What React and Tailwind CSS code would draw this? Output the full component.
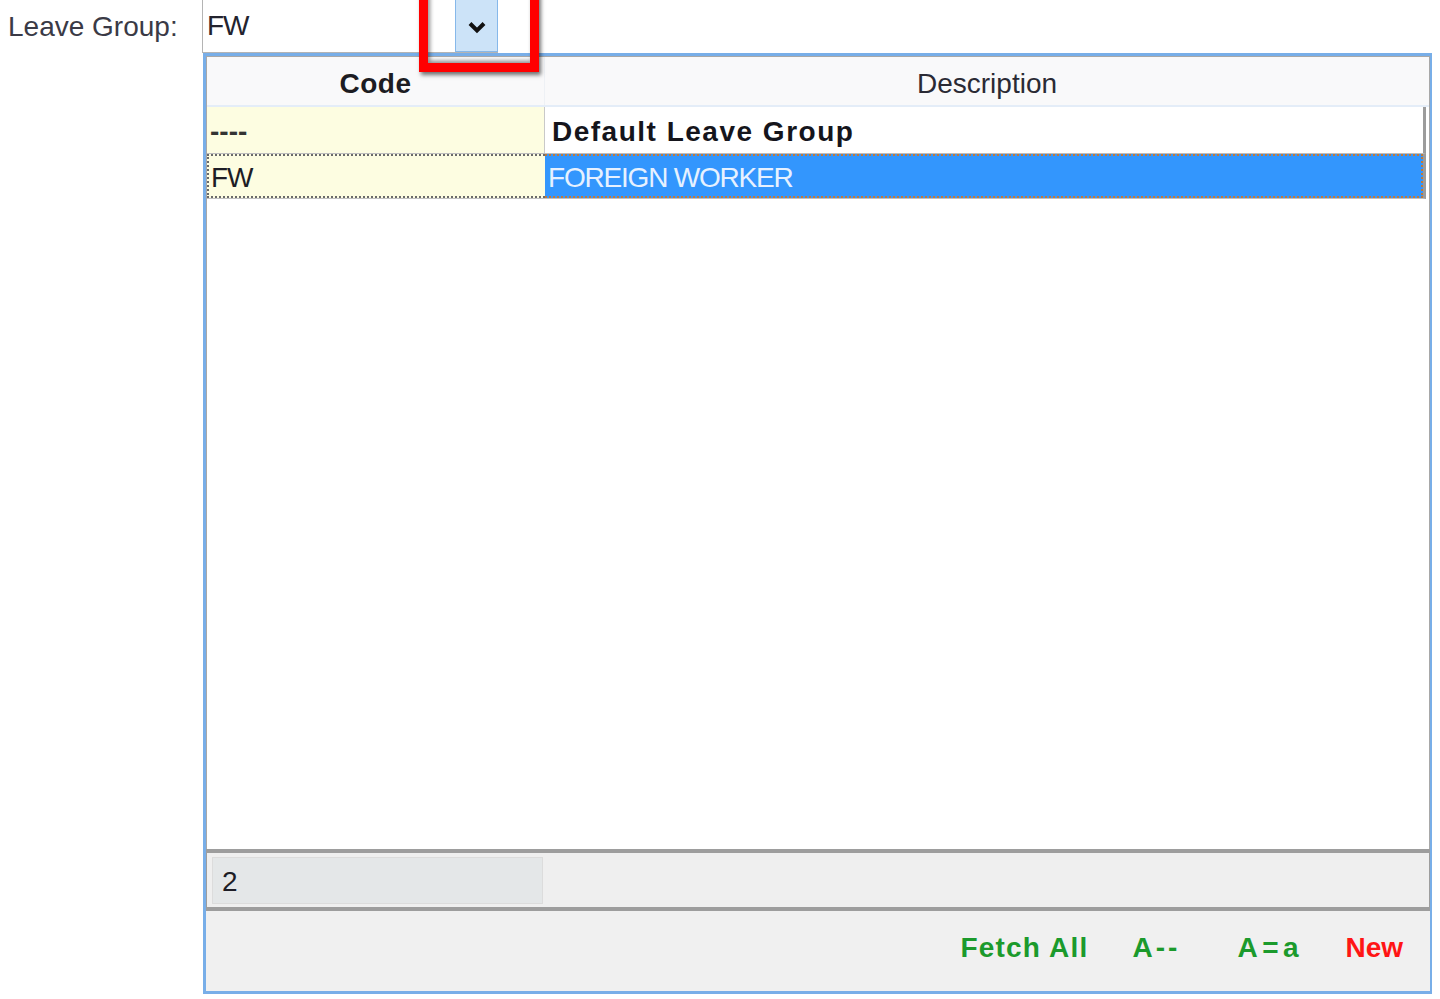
import React from "react";

export default function App() {
  return (
    <div
      className="relative w-[1440px] h-[999px] overflow-hidden bg-white"
      style={{ fontFamily: '"Liberation Sans", Arial, sans-serif' }}
    >
      {/* Top row: label + combo */}
      <div className="flex h-[53px] items-stretch">
        <div className="w-[202px] pl-[8px] flex items-center text-[28px] text-[#3a3a46]">
          Leave Group:
        </div>
        <div className="relative flex w-[296px] border-l border-b border-[#b4b4b4] bg-white -mt-[2px]">
          <div className="flex-1 pl-[4px] flex items-center pt-[2px] text-[28px] text-[#23232e] tracking-[-1px]">
            FW
          </div>
          <div className="w-[43px] bg-[#cce3f8] border border-[#86b8ea] flex items-center justify-center pt-[3px]">
            <svg width="20" height="14" viewBox="0 0 20 14">
              <path d="M3 3.5 L10 10.5 L17 3.5" fill="none" stroke="#111" strokeWidth="4" strokeLinejoin="miter" />
            </svg>
          </div>
        </div>
      </div>

      {/* Red highlight box */}
      <div className="absolute left-[419px] top-[-12px] w-[120px] h-[84px] border-[9px] border-[#ff0000] shadow-[2px_3px_4px_rgba(0,0,0,0.55),inset_2px_-2px_4px_rgba(0,0,0,0.45)]" />

      {/* Dropdown panel */}
      <div className="ml-[203px] w-[1229px] h-[941px] border-[3px] border-r-2 border-[#78aee8] flex flex-col bg-white">
        {/* Grid */}
        <div className="flex-1 flex flex-col border-x border-t border-[#a8a8a8] bg-white">
          {/* header */}
          <div className="flex h-[50px] bg-[#f9f9fa] border-b-2 border-[#e4edf8]">
            <div className="w-[338px] flex items-center justify-center pt-[6px] border-r border-[#eef1f5] text-[28px] font-bold text-[#1c1c22] tracking-[0.5px]">
              Code
            </div>
            <div className="flex-1 flex items-center justify-center pt-[6px] text-[28px] text-[#2a2a34]">
              Description
            </div>
          </div>
          {/* row 1 */}
          <div className="flex h-[47px] border-b border-[#bdbdbd] mr-[3px] border-r-[3px] border-r-[#9c9c9c]">
            <div className="w-[338px] bg-[#fdfde1] border-r border-[#c9c9c9] flex items-center pl-[3px] pt-[3px] text-[28px] font-bold text-[#333]">
              ----
            </div>
            <div className="flex-1 flex items-center pl-[7px] pt-[3px] text-[28px] font-bold text-[#15151c] tracking-[1.5px]">
              Default Leave Group
            </div>
          </div>
          {/* row 2 (selected) */}
          <div className="flex h-[45px] mr-[3px] border-r-[3px] border-r-[#9c9c9c] border-b border-b-[#c0c0c0]">
            <div className="w-[338px] bg-[#fdfde1] border-2 border-dotted border-[#6a6a6a] border-r-0 flex items-center pl-[2px] pt-[4px] text-[28px] text-[#1d1d26] tracking-[-1px]">
              FW
            </div>
            <div className="flex-1 bg-[#3396fd] border-2 border-dotted border-[#c07a3a] border-l-0 flex items-center pl-[3px] pt-[4px] text-[28px] text-[#e6f1ff] tracking-[-1.2px]">
              FOREIGN WORKER
            </div>
          </div>
          <div className="flex-1" />
        </div>

        {/* footer row */}
        <div className="h-[62px] shrink-0 border-y-4 border-x border-[#9d9d9d] bg-[#efefef] flex items-center pl-[5px]">
          <div className="w-[331px] h-[47px] bg-[#e4e7e8] border border-[#dcdcdc] flex items-center pl-[9px] pt-[3px] text-[28px] text-[#1d1d26]">
            2
          </div>
        </div>

        {/* button bar */}
        <div className="h-[80px] shrink-0 bg-[#f0f0f0] flex items-center justify-end pr-[27px] pb-[6px] text-[28px] font-bold">
          <span className="text-[#1b9a2c] tracking-[1.2px]">Fetch All</span>
          <span className="ml-[44px] w-[60px] text-[#1b9a2c] tracking-[3px]">A--</span>
          <span className="ml-[45px] w-[66px] text-[#1b9a2c] tracking-[4.5px]">A=a</span>
          <span className="ml-[42px] text-[#ff1515]">New</span>
        </div>
      </div>
    </div>
  );
}
